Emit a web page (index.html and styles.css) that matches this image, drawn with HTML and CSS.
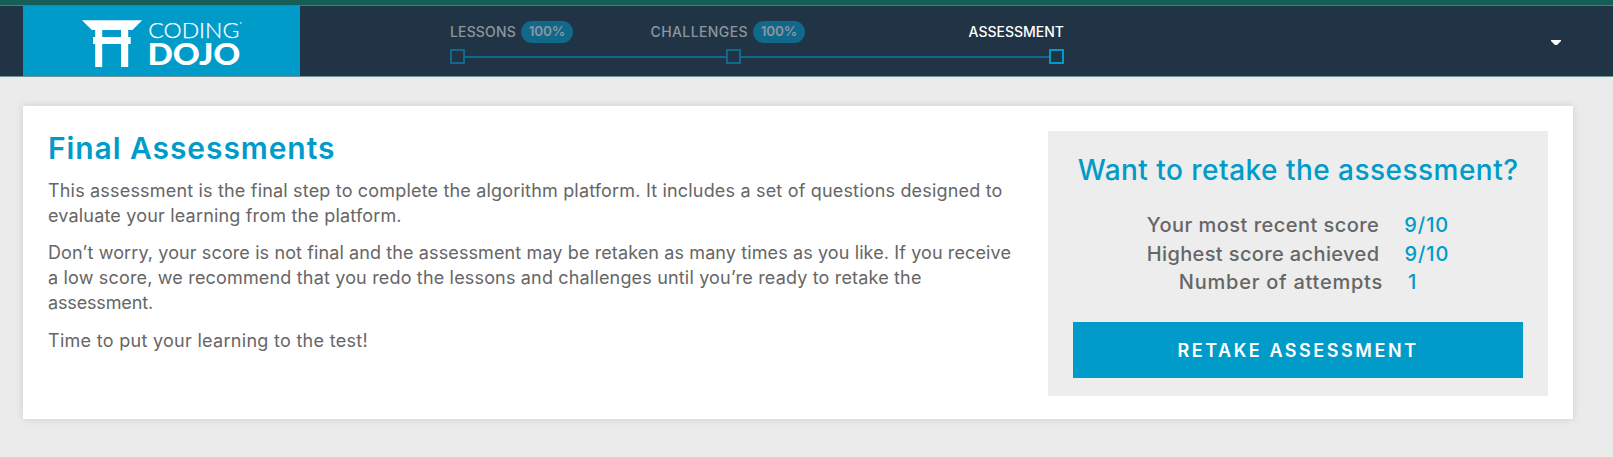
FILE: index.html
```
<!DOCTYPE html>
<html lang="en">
<head>
<meta charset="utf-8">
<title>Final Assessments</title>
<link rel="stylesheet" href="styles.css">
</head>
<body>
<div class="top-strip"></div>
<header class="header">
  <a class="logo">
    <svg width="277" height="70" viewBox="23 6 277 70">
      <g fill="#fff">
        <path d="M82 20.2H142.2L132.5 30H91.8Z"/>
        <path d="M95.2 29H102.2V37H121V29H128.2V37H130.7V44H128.2V67H121V44H102.2V67H95.2V44H93V37H95.2Z"/>
        <text class="logo-light" x="148.3" y="38" textLength="91" lengthAdjust="spacingAndGlyphs">CODING</text>
        <text class="logo-bold" x="147.4" y="65.3" textLength="93" lengthAdjust="spacingAndGlyphs">DOJO</text>
        <circle cx="240.8" cy="23" r="1" opacity=".6"/>
      </g>
    </svg>
  </a>
  <nav class="progress">
    <div class="labels">
      <div class="step lessons">LESSONS<span class="pill">100%</span></div>
      <div class="step challenges">CHALLENGES<span class="pill">100%</span></div>
      <div class="step current">ASSESSMENT</div>
    </div>
    <div class="track">
      <i class="box"></i><i class="line first"></i><i class="box"></i><i class="line"></i><i class="box active"></i>
    </div>
  </nav>
  <svg class="caret" width="10" height="5" viewBox="0 0 10 5"><path d="M0 0H10V1L6 5H4L0 1Z" fill="#fff"/></svg>
</header>
<main class="card">
  <section class="intro">
    <h1>Final Assessments</h1>
    <p class="what">This assessment is the final step to complete the algorithm platform. It includes a set of questions designed to<br>evaluate your learning from the platform.</p>
    <p class="retry">Don’t worry, your score is not final and the assessment may be retaken as many times as you like. If you receive<br><span class="redo">a low score, we recommend that you redo the lessons and challenges until you’re ready to retake the</span><br><span class="end">assessment.</span></p>
    <p class="go">Time to put your learning to the test!</p>
  </section>
  <aside class="panel">
    <h2>Want to retake the assessment?</h2>
    <div class="scores">
      <div class="row"><span>Your most recent score</span><b>9/10</b></div>
      <div class="row highest"><span>Highest score achieved</span><b>9/10</b></div>
      <div class="row attempts"><span>Number of attempts</span><b>1</b></div>
    </div>
    <button class="retake">RETAKE ASSESSMENT</button>
  </aside>
</main>
</body>
</html>
```
FILE: styles.css
```
* { box-sizing: border-box; }
body {
  margin: 0;
  min-height: 100vh;
  background: #ebebeb;
  color: #666;
  font-family: Inter, "Open Sans", sans-serif;
}
.top-strip { height: 6px; background: #155f58; border-bottom: 1px solid #3f8478; }
.header {
  display: flex;
  height: 71px;
  padding-left: 23px;
  background: #213446;
  border-bottom: 1px solid #71969a;
}
.logo { width: 277px; height: 70px; background: #009bc9; }
.logo svg { display: block; }
.logo-light { font: 300 21.5px Lato, sans-serif; stroke: #fff; stroke-width: .25px; }
.logo-bold { font: 900 30px Lato, sans-serif; }
.progress { width: 614px; margin-left: 150px; padding-top: 15px; }
.labels { display: flex; height: 22px; margin-bottom: 6px; color: #8c969f; }
.step { display: flex; font-size: 14px; font-weight: 500; line-height: 22px; letter-spacing: .15px; white-space: nowrap; }
.lessons { width: 200.5px; }
.challenges { letter-spacing: .4px; }
.current { margin-left: auto; color: #fff; letter-spacing: 0; }
.pill {
  width: 52px;
  height: 22px;
  margin-left: 5px;
  border-radius: 11px;
  background: #10688a;
  font-size: 13.5px;
  font-weight: 600;
  letter-spacing: -.2px;
  line-height: 21px;
  text-align: center;
}
.track { display: flex; align-items: center; }
.box { width: 15px; height: 15px; border: 2px solid #10688a; }
.box.active { border-color: #009bc9; }
.line { flex: 1; height: 2px; background: #10688a; }
.line.first { flex: 0 0 261px; }
.caret { margin: 34px 0 0 487px; }
.card {
  display: flex;
  justify-content: space-between;
  width: 1550px;
  height: 313px;
  margin: 29px 0 0 23px;
  padding: 25px 25px 0;
  background: #fff;
  box-shadow: 0 0 8px rgba(0, 0, 0, .12);
}
h1, h2 { margin: 0; color: #009bc9; font-weight: 500; line-height: 34px; white-space: nowrap; }
h1 { margin-bottom: 13px; font-size: 30px; font-weight: 600; letter-spacing: .92px; }
p { margin: 0 0 12px; font-size: 18px; line-height: 25px; white-space: nowrap; }
.what { letter-spacing: .18px; }
.retry { margin-bottom: 13px; letter-spacing: .11px; }
.redo { letter-spacing: .17px; }
.end { letter-spacing: -.15px; }
.go { letter-spacing: .29px; }
.panel { width: 500px; height: 265px; padding: 22px 25px 0; background: #ededed; }
h2 { font-size: 28px; letter-spacing: .47px; text-align: center; }
.scores { height: 86px; margin: 24px 0 25px; font-size: 20px; font-weight: 500; line-height: 28.5px; }
.row { display: flex; justify-content: center; gap: 25px; letter-spacing: .47px; }
.row b { color: #009bc9; font-weight: 500; letter-spacing: .9px; }
.highest { letter-spacing: .38px; }
.attempts { letter-spacing: .75px; }
.retake {
  display: block;
  width: 450px;
  height: 56px;
  padding: 1px 0 0;
  border: 0;
  background: #009bc9;
  color: #fff;
  font: 600 18px Inter, sans-serif;
  letter-spacing: 2.55px;
}
```
